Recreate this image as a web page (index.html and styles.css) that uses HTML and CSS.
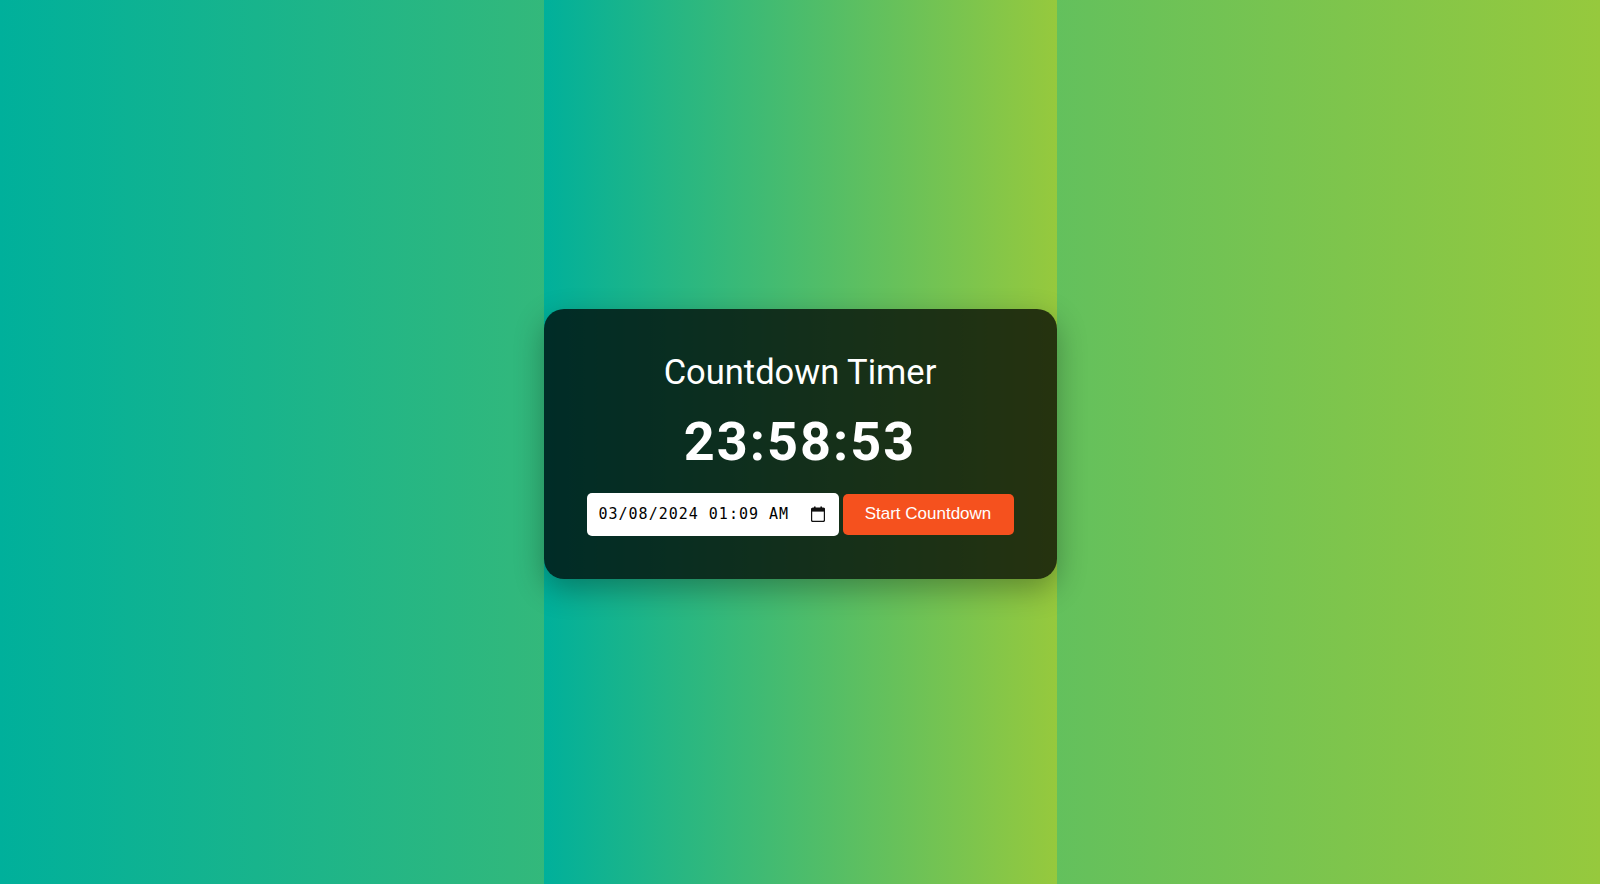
FILE: index.html
```html
<!DOCTYPE html>
<html lang="en">
<head>
<meta charset="UTF-8">
<title>Countdown Timer</title>
<link rel="stylesheet" href="styles.css">
</head>
<body>
<div class="container">
  <div class="card">
    <h1 class="title">Countdown Timer</h1>
    <div class="timer">23:58:53</div>
    <div class="controls">
      <label class="date-field">
        <input class="date-input" type="text" value="03/08/2024 01:09 AM" aria-label="Target date and time">
        <svg class="cal-icon" width="14" height="16" viewBox="0 0 14 16" aria-hidden="true">
          <rect x="3" y="0.5" width="1.6" height="3" fill="#111"/>
          <rect x="9.4" y="0.5" width="1.6" height="3" fill="#111"/>
          <path d="M2 2.2h10a1.5 1.5 0 0 1 1.5 1.5v10.3a1.5 1.5 0 0 1-1.5 1.5H2A1.5 1.5 0 0 1 .5 14V3.7A1.5 1.5 0 0 1 2 2.2z" fill="none" stroke="#111" stroke-width="1.4"/>
          <rect x="0.6" y="2.4" width="12.8" height="3.2" fill="#111"/>
        </svg>
      </label>
      <button class="start-btn" type="button">Start Countdown</button>
    </div>
  </div>
</div>
</body>
</html>
```
FILE: styles.css
```css
html, body {
  margin: 0;
  padding: 0;
}

body {
  height: 100vh;
  display: flex;
  justify-content: center;
  background: linear-gradient(to right, #00b09b, #96c93d);
  font-family: Roboto, "Liberation Sans", Arial, sans-serif;
}

.container {
  height: 100vh;
  display: flex;
  align-items: center;
  background: linear-gradient(to right, #00b09b, #96c93d);
}

.card {
  box-sizing: border-box;
  width: 513px;
  margin-top: 3px;
  padding: 43px 43px 43px;
  background: rgba(0, 0, 0, 0.75);
  border-radius: 20px;
  box-shadow: 0 10px 30px rgba(0, 0, 0, 0.3);
  display: flex;
  flex-direction: column;
  align-items: center;
  color: #fff;
}

.title {
  margin: 0 0 18px;
  font-family: Roboto, sans-serif;
  font-size: 34.5px;
  font-weight: 400;
  line-height: normal;
}

.timer {
  margin: 0 0 20px;
  font-family: Roboto, sans-serif;
  font-size: 54px;
  font-weight: 700;
  letter-spacing: 2px;
  line-height: normal;
}

.controls {
  display: flex;
  align-items: center;
  gap: 4px;
}

.date-field {
  box-sizing: border-box;
  width: 252px;
  height: 43px;
  padding: 0 14px 0 12px;
  border-radius: 5px;
  background: #fff;
  display: flex;
  align-items: center;
  gap: 6px;
}

.date-input {
  flex: 1;
  min-width: 0;
  padding: 0;
  border: none;
  outline: none;
  background: transparent;
  color: #000;
  font-family: "DejaVu Sans Mono", monospace;
  font-size: 15px;
  letter-spacing: 1px;
}

.cal-icon {
  flex: none;
  display: block;
}

.start-btn {
  box-sizing: border-box;
  width: 171px;
  height: 41px;
  padding: 0 10px;
  border: none;
  border-radius: 5px;
  background: #f5511e;
  color: #fff;
  font-family: "Liberation Sans", Arial, sans-serif;
  font-size: 17px;
  cursor: pointer;
}
```
